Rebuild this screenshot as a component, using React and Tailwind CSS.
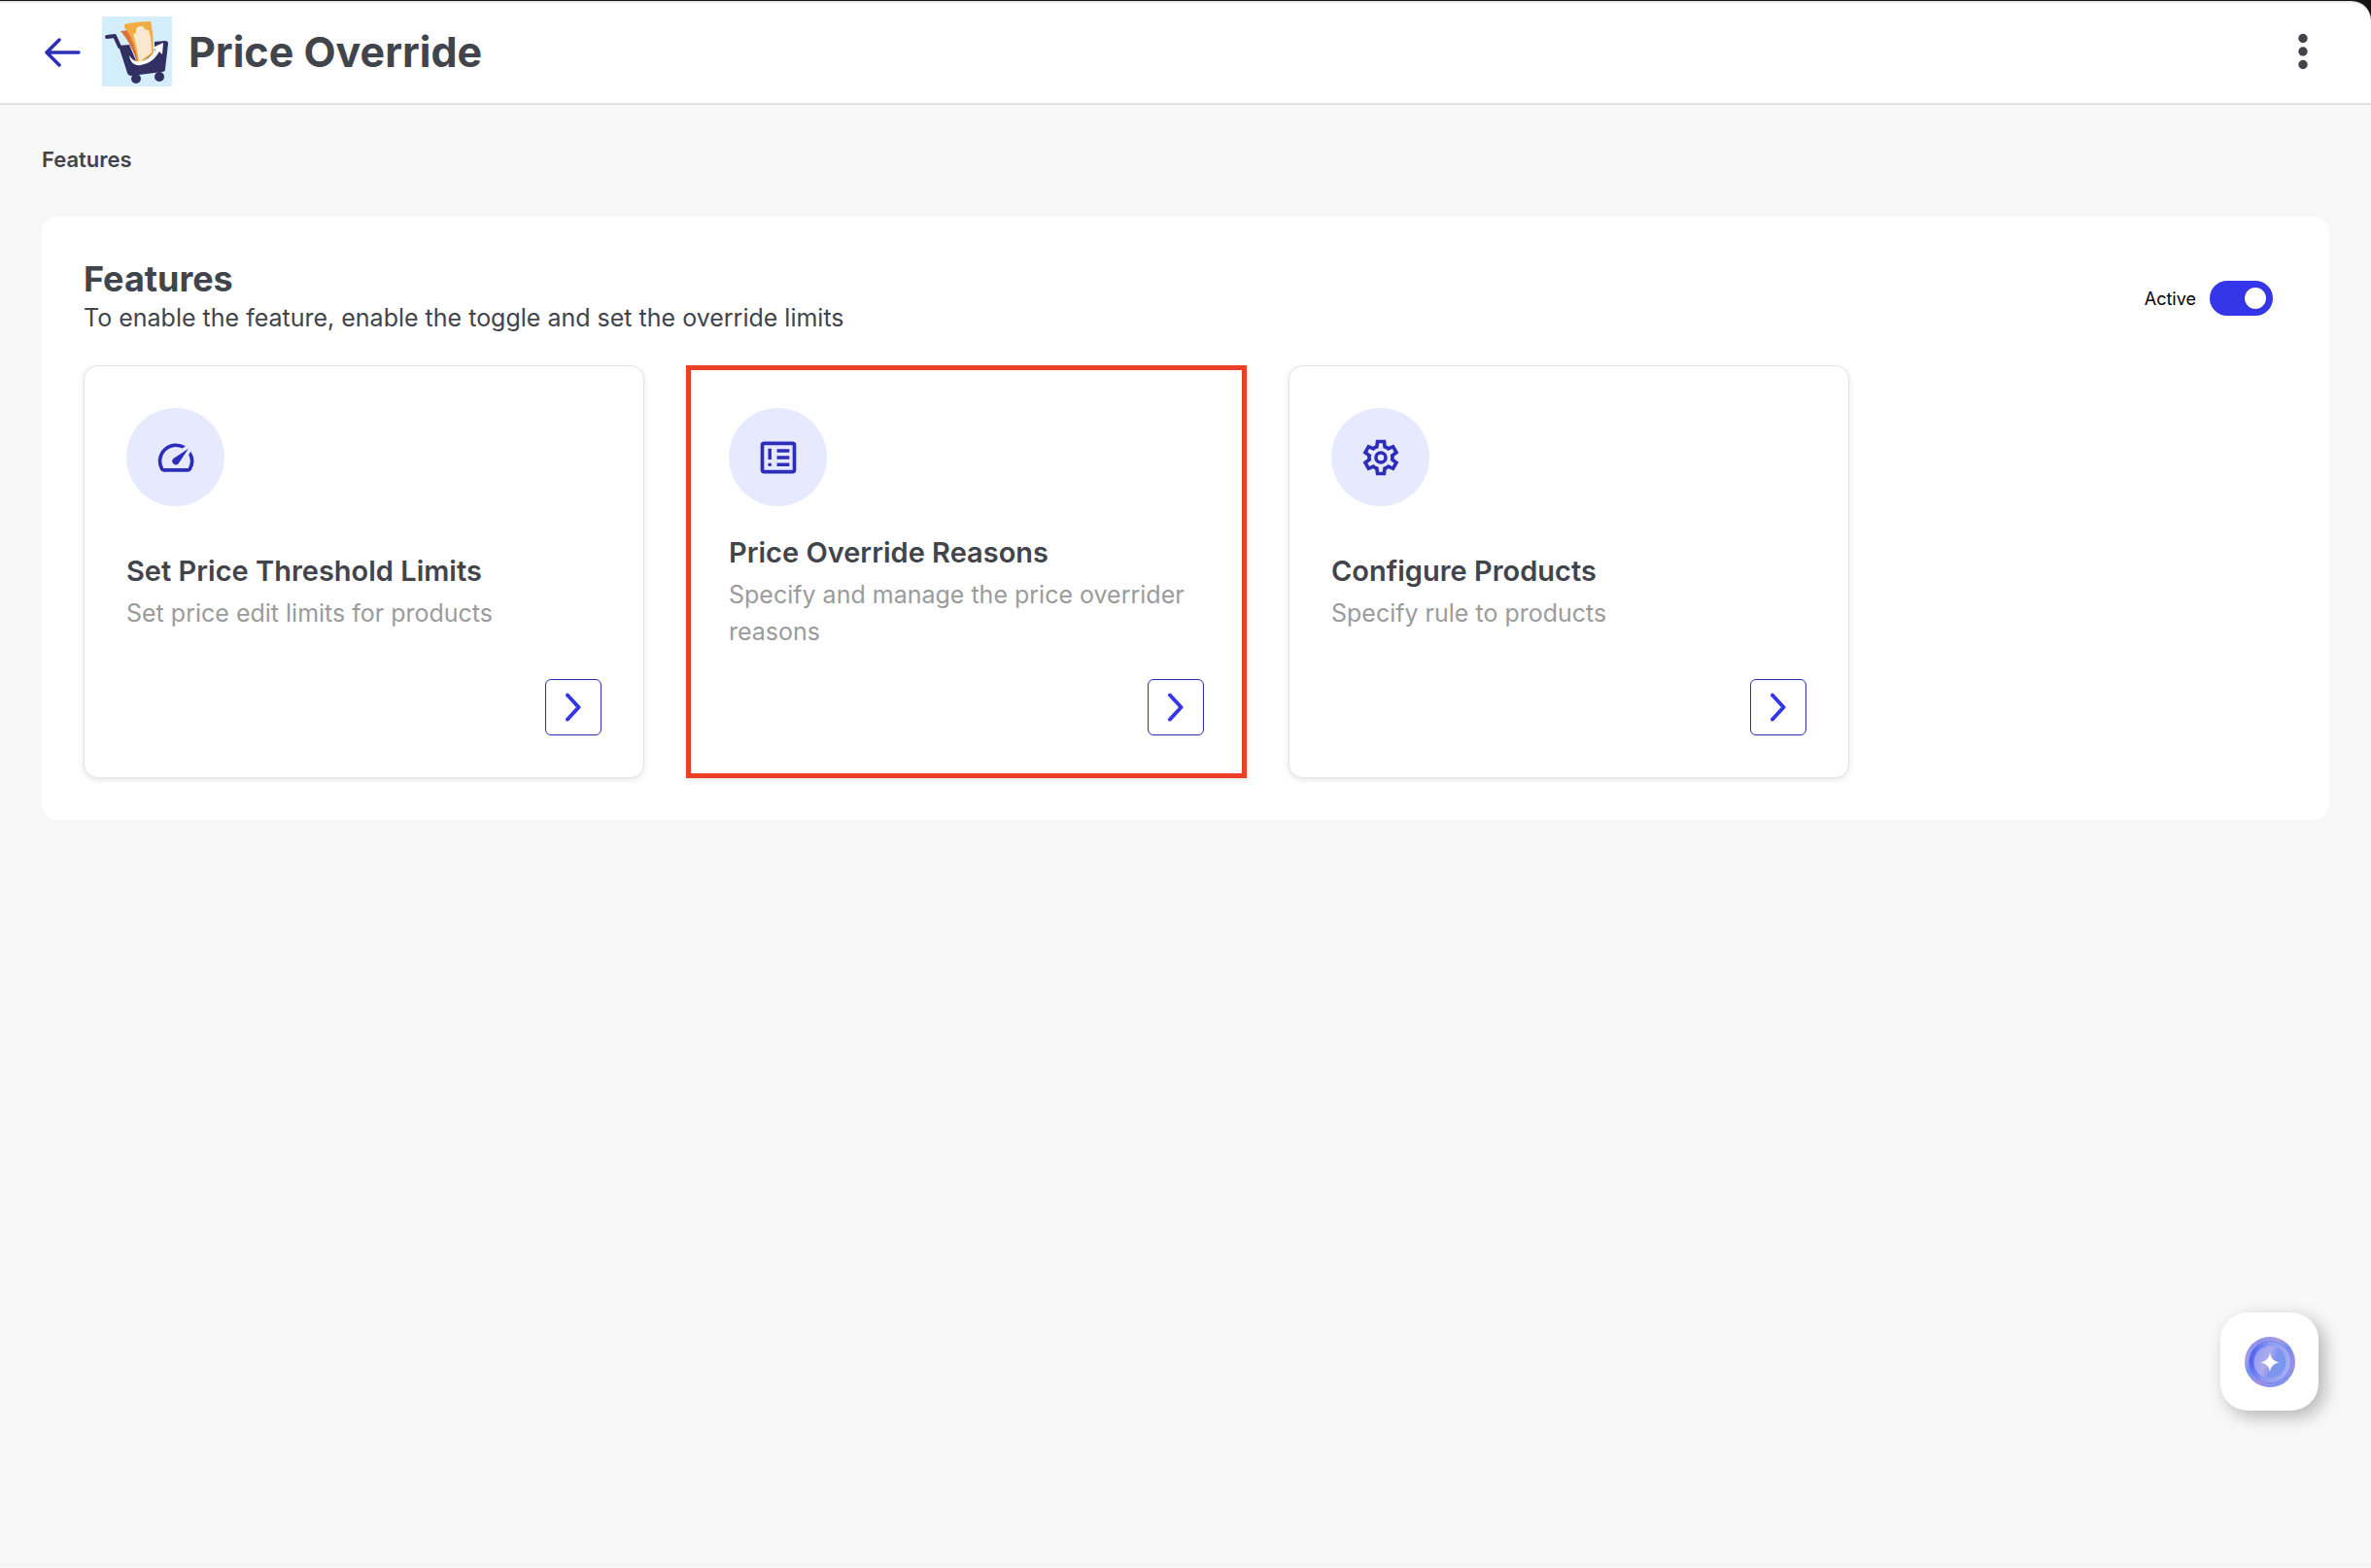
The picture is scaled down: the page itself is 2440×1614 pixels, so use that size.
import { useState } from 'react'
import { MdOutlineSpeed } from 'react-icons/md'

const ReasonsIcon = ({ className }) => (
  <svg viewBox="0 0 24 24" fill="none" stroke="currentColor" className={className}>
    <rect x="3" y="4" width="18" height="16" rx="1" strokeWidth="2" />
    <path d="M11.2 8.200h7M11.200 12h7M11.200 16h7M7.200 6.900v6.200" strokeWidth="1.9" />
    <circle cx="7.2" cy="16" r="1" fill="currentColor" stroke="none" />
  </svg>
)

const GearIcon = ({ className }) => (
  <svg viewBox="0 -960 960 960" fill="currentColor" className={className}>
    <path d="m370-80-16-128q-13-5-24.5-12T307-235l-119 50L78-375l103-78q-1-7-1-13.5v-27q0-6.5 1-13.5L78-585l110-190 119 50q11-8 23-15t24-12l16-128h220l16 128q13 5 24.5 12t22.5 15l119-50 110 190-103 78q1 7 1 13.5v27q0 6.5-2 13.5l103 78-110 190-118-50q-11 8-23 15t-24 12L590-80H370Zm70-80h79l14-106q31-8 57.5-23.5T639-327l99 41 39-68-86-65q5-14 7-29.5t2-31.5q0-16-2-31.5t-7-29.5l86-65-39-68-99 42q-22-23-48.5-38.5T533-694l-13-106h-79l-14 106q-31 8-57.5 23.5T321-633l-99-41-39 68 86 64q-5 15-7 30t-2 32q0 16 2 31t7 30l-86 65 39 68 99-42q22 23 48.5 38.5T427-266l13 106Z" />
    <circle cx="480" cy="-480" r="110" fill="none" stroke="currentColor" strokeWidth="78" />
  </svg>
)

const CartLogo = () => (
  <svg viewBox="0 0 72 72" className="h-[72px] w-[72px] bg-[#d5eefc]">
    <path d="M19 15l8-1 13 32-4 2C33 36 27 24 19 15z" fill="#dd7036" />
    <path d="M23 8c9-2 18-3 27-3 3 13 3 26 3 36L37 48C35 34 31 21 23 11z" fill="#f0ad43" />
    <path d="M35 13c1-2 2-3 7-3 2 4 4 4 6 4 3 9 3 18 3 23L38 47c-1-9-3-19-6-29 2 0 4-2 3-5z" fill="#f7e8cf" />
    <path d="M5 21l8-1 5 11" fill="none" stroke="#322f63" strokeWidth="4" strokeLinecap="round" strokeLinejoin="round" />
    <path d="M17 30l11-1 8 19h4l14-11V26l11-1q3 0 3 3l-3 26q0 3-3 3l-32 4q-3 0-4-3z" fill="#322f63" />
    <path d="M28 40c1 8 6 11 12 10 10-2 15-7 19-14l3 3 1-12-11 5 3 2c-4 7-9 11-15 12-5 1-9-1-12-6z" fill="#fff" />
    <circle cx="35" cy="64" r="5" fill="#322f63" />
    <circle cx="59" cy="62" r="5" fill="#322f63" />
  </svg>
)

const AssistantIcon = () => (
  <svg viewBox="0 0 52 52" className="h-[52px] w-[52px]">
    <defs>
      <linearGradient id="outer" x1="0.2" y1="0" x2="0.8" y2="1">
        <stop offset="0" stopColor="#7c8cee" />
        <stop offset="0.25" stopColor="#aa9de8" />
        <stop offset="0.45" stopColor="#6f90ee" />
        <stop offset="0.7" stopColor="#a58ae4" />
        <stop offset="1" stopColor="#6b98ee" />
      </linearGradient>
      <linearGradient id="ring" x1="0" y1="0.4" x2="1" y2="0.6">
        <stop offset="0" stopColor="#4a5bf2" />
        <stop offset="0.4" stopColor="#8a9af0" />
        <stop offset="1" stopColor="#aaaef4" />
      </linearGradient>
      <linearGradient id="core" x1="0" y1="0.3" x2="1" y2="0.7">
        <stop offset="0" stopColor="#939ff2" />
        <stop offset="0.4" stopColor="#aeabee" />
        <stop offset="0.6" stopColor="#8094ee" />
        <stop offset="1" stopColor="#7498ee" />
      </linearGradient>
    </defs>
    <circle cx="26" cy="26" r="26" fill="url(#outer)" />
    <circle cx="26" cy="26" r="21.5" fill="url(#ring)" stroke="#6a7fea" strokeWidth="0.6" />
    <circle cx="26" cy="26" r="16.5" fill="url(#core)" />
    <path d="M26 16.5c1.2 5.6 3.4 8.2 9.5 9.8-6.1 1.6-8.3 4.2-9.5 9.7-1.2-5.5-3.4-8.1-9.5-9.7 6.1-1.6 8.3-4.2 9.5-9.8z" fill="#fff" />
  </svg>
)

const features = [
  {
    title: 'Set Price Threshold Limits',
    description: 'Set price edit limits for products',
    icon: MdOutlineSpeed,
  },
  {
    title: 'Price Override Reasons',
    description: 'Specify and manage the price overrider reasons',
    icon: ReasonsIcon,
    highlighted: true,
  },
  {
    title: 'Configure Products',
    description: 'Specify rule to products',
    icon: GearIcon,
  },
]

const FeatureCard = ({ title, description, icon: Icon, highlighted }) => (
  <article
    className={`flex min-h-[425px] flex-col justify-between bg-white shadow-[0_2px_6px_rgba(0,0,0,0.1)] ${
      highlighted ? 'border-5 border-[#eb4026] p-[39px]' : 'rounded-[14px] border border-[#e4e4e4] p-[43px]'
    }`}
  >
    <div className="flex h-[101px] w-[101px] items-center justify-center rounded-full bg-[#e7eafe]">
      <Icon className="h-11 w-11 text-[#2c2eba]" />
    </div>
    <div>
      <h3 className="text-[29px] leading-9 font-semibold">{title}</h3>
      <p className="mt-[6px] text-[25px] leading-[38px] text-[#9b9b9b]">{description}</p>
    </div>
    <button
      aria-label={`Open ${title}`}
      className="flex h-[58px] w-[58px] items-center justify-center self-end rounded-md border border-[#2c2eba] text-[#3535e9]"
    >
      <svg viewBox="0 0 16 30" fill="none" stroke="currentColor" strokeWidth="4" strokeLinecap="round" strokeLinejoin="round" className="h-[30px] w-4">
        <path d="M2 2.5L13.500 15 2 27.500" />
      </svg>
    </button>
  </article>
)

const App = () => {
  const [active, setActive] = useState(true)

  return (
    <div className="min-h-screen border-b-5 border-[#f4f4f4] bg-[#f8f8f8] font-['Inter',sans-serif] text-[#42444c]">
      {/* Header */}
      <div className="bg-[#141414] pt-px">
        <header className="flex h-[107px] items-center justify-between rounded-tr-[20px] border-t-2 border-b-2 border-t-[#ebe8eb] border-b-[#e0e0e0] bg-white pr-14 pb-[3px] pl-11">
          <div className="flex items-center">
            <a href="#back" aria-label="Back" className="text-[#2c2eba]">
              <svg viewBox="0 0 40 32" fill="none" stroke="currentColor" strokeWidth="3.5" strokeLinecap="round" strokeLinejoin="round" className="h-8 w-10">
                <path d="M37 17H4M17 4L4 17l13 13" />
              </svg>
            </a>
            <div className="ml-[21px]">
              <CartLogo />
            </div>
            <h1 className="ml-[17px] text-[43px] leading-[56px] font-bold">Price Override</h1>
          </div>
          <button aria-label="More options" className="px-2">
            <svg viewBox="0 0 12 38" fill="currentColor" className="h-[38px] w-3">
              <circle cx="6" cy="5.5" r="4.7" />
              <circle cx="6" cy="19" r="4.7" />
              <circle cx="6" cy="32.5" r="4.7" />
            </svg>
          </button>
        </header>
      </div>

      <main className="px-[43px] pt-10">
        <nav aria-label="Breadcrumb" className="text-[22px] leading-8 font-semibold">
          Features
        </nav>

        {/* Features panel */}
        <section className="mt-[43px] rounded-2xl bg-white px-[43px] pt-[42px] pb-[43px]">
          <div className="flex items-start justify-between">
            <div>
              <h2 className="text-[36px] leading-[44px] font-bold">Features</h2>
              <p className="text-[25px] leading-9">
                To enable the feature, enable the toggle and set the override limits
              </p>
            </div>
            <label className="mt-6 mr-[15px] flex cursor-pointer items-center gap-[14px] text-[18px] text-black">
              Active
              <input
                type="checkbox"
                role="switch"
                checked={active}
                onChange={() => setActive(!active)}
                className="h-9 w-[65px] cursor-pointer appearance-none rounded-full bg-gray-300 p-[7px] before:block before:h-[22px] before:w-[22px] before:rounded-full before:bg-white before:shadow-sm checked:bg-[#3535e9] checked:before:ml-auto"
              />
            </label>
          </div>

          <div className="mt-[31px] grid grid-cols-[repeat(auto-fit,577px)] gap-[43px]">
            {features.map((feature) => (
              <FeatureCard key={feature.title} {...feature} />
            ))}
          </div>
        </section>
      </main>

      {/* Assistant launcher */}
      <button
        aria-label="Open assistant"
        className="fixed right-[54px] bottom-[162px] flex h-[101px] w-[101px] items-center justify-center rounded-[28px] bg-white shadow-[6px_6px_18px_rgba(0,0,0,0.28)]"
      >
        <AssistantIcon />
      </button>
    </div>
  )
}

export default App
